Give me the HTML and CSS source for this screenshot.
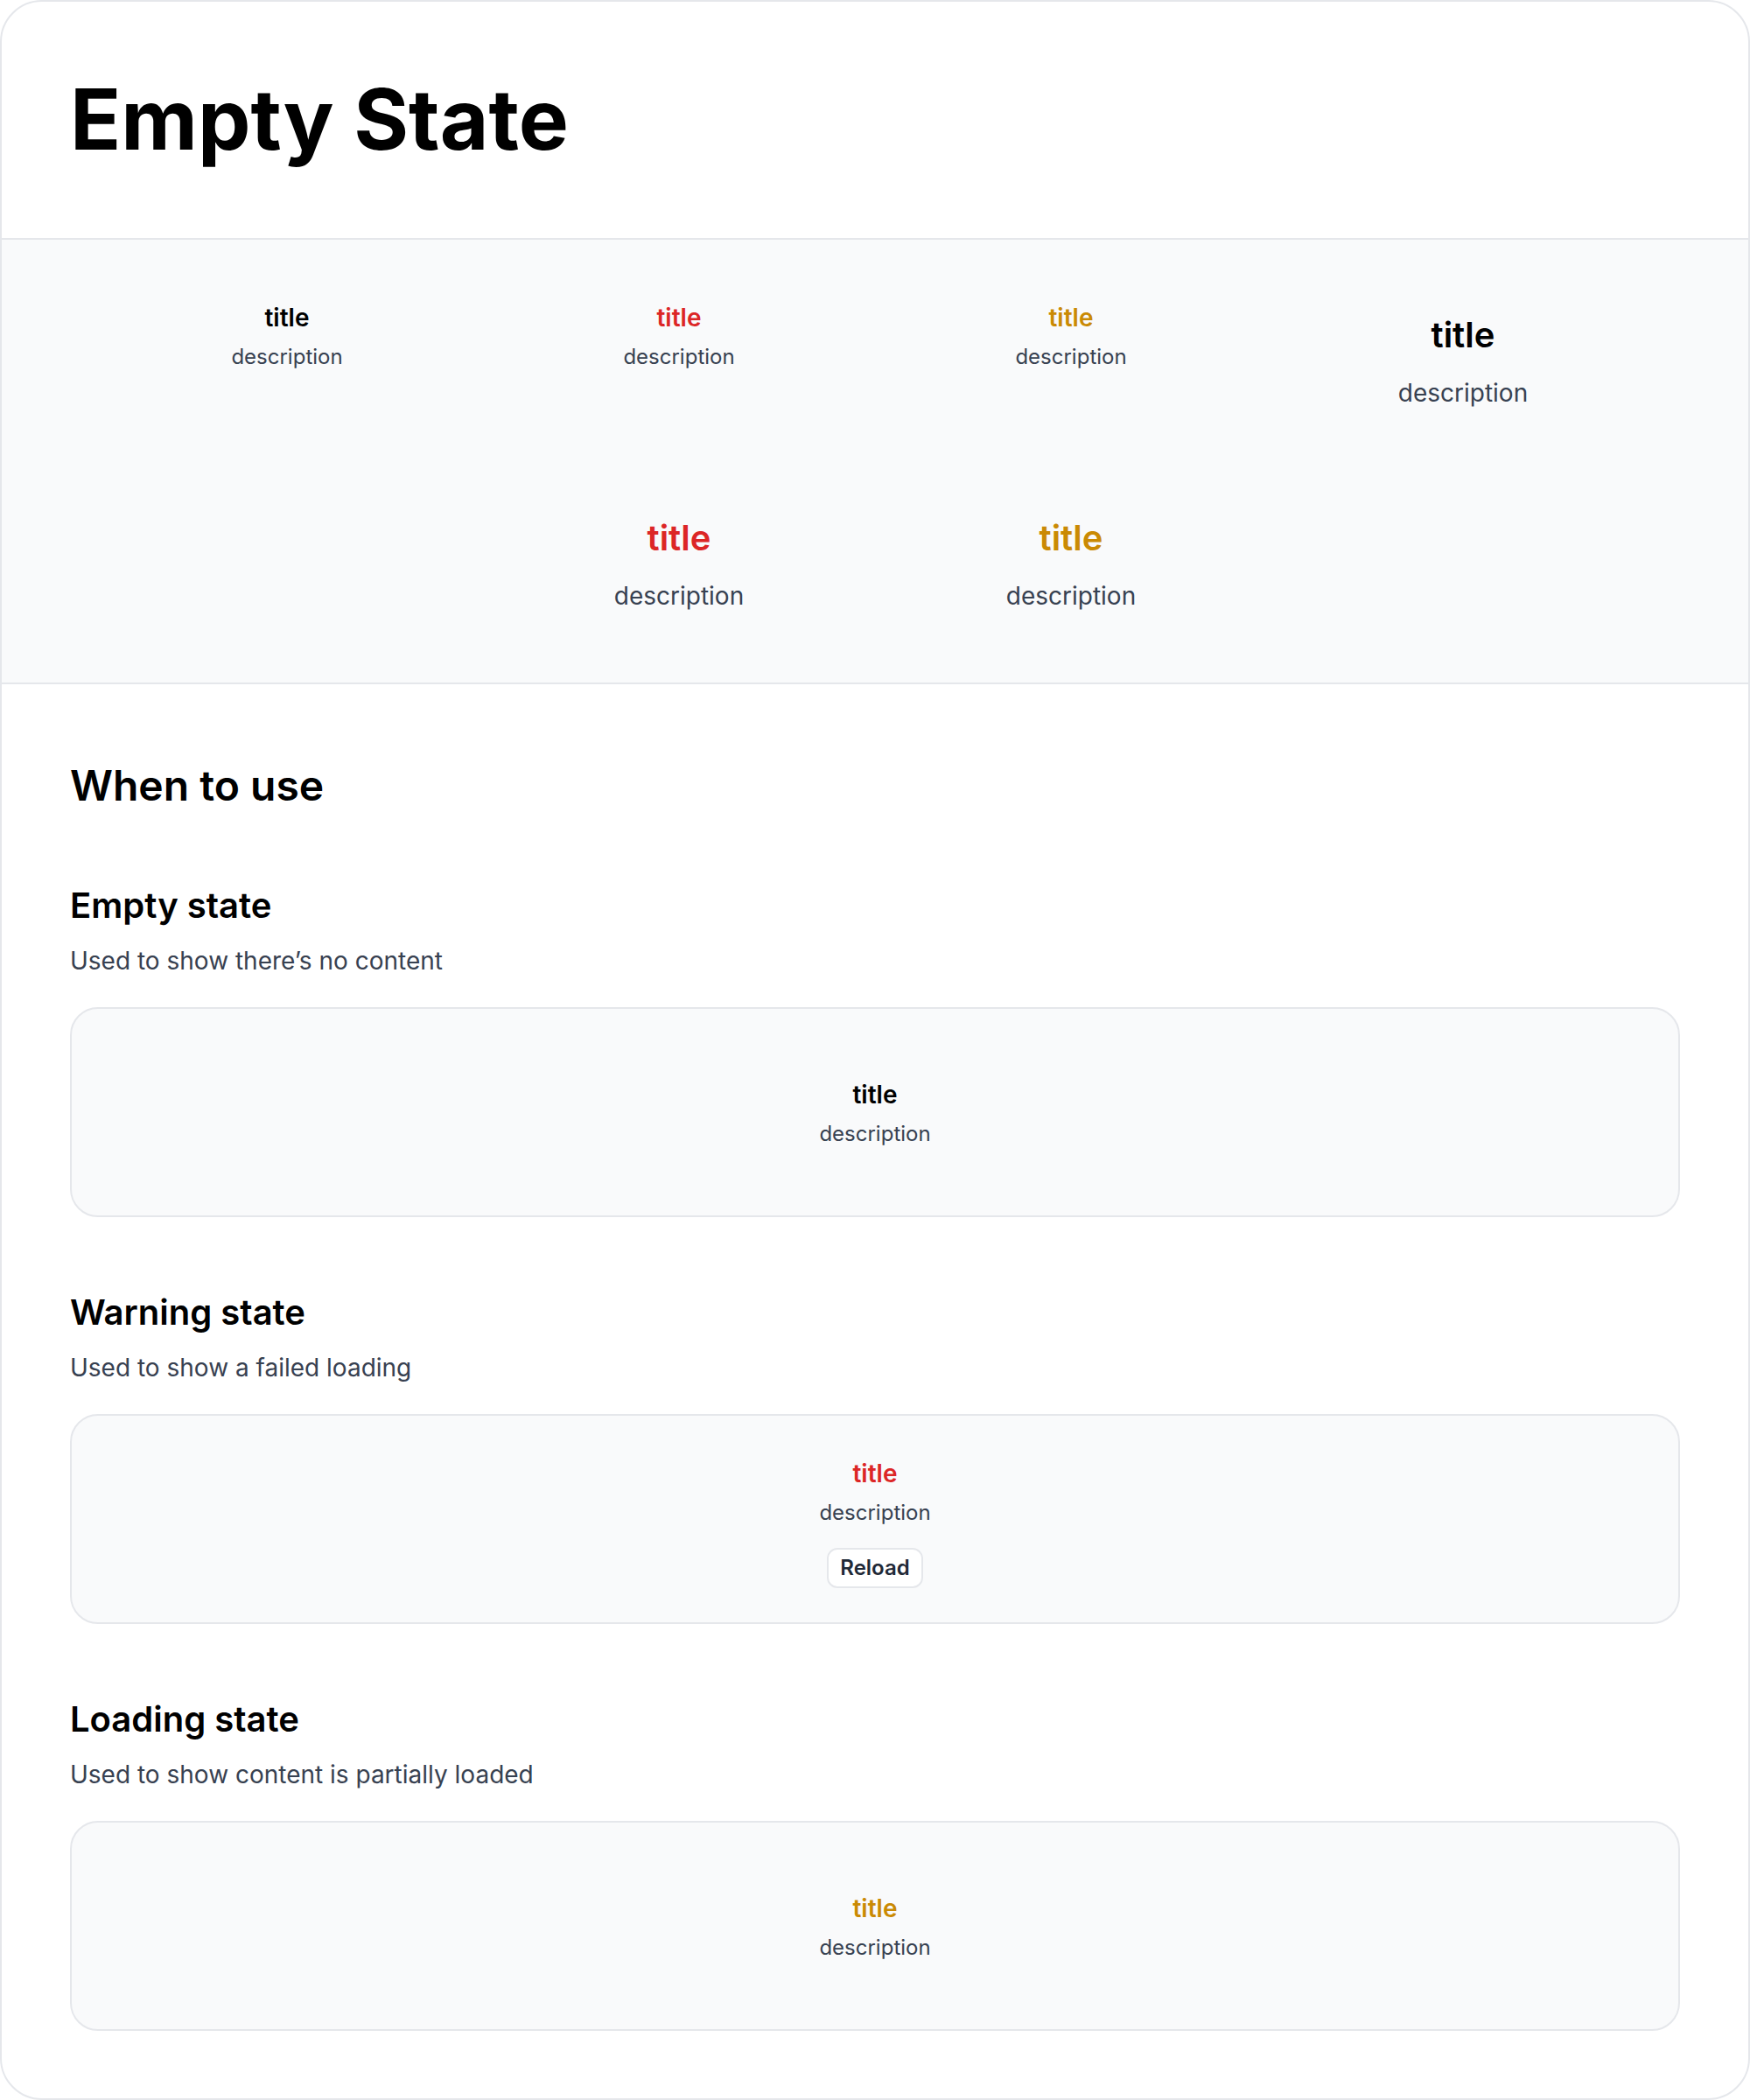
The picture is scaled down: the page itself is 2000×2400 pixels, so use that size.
FILE: index.html
```html
<!DOCTYPE html>
<html lang="en">
<head>
<meta charset="utf-8">
<title>Empty State</title>
<link rel="stylesheet" href="styles.css">
</head>
<body>
<div class="page">
  <header class="page-header">
    <h1 class="page-title">Empty State</h1>
  </header>

  <section class="showcase">
    <div class="es es-sm">
      <div class="es-title">title</div>
      <div class="es-desc">description</div>
    </div>
    <div class="es es-sm">
      <div class="es-title tone-danger">title</div>
      <div class="es-desc">description</div>
    </div>
    <div class="es es-sm">
      <div class="es-title tone-warning">title</div>
      <div class="es-desc">description</div>
    </div>
    <div class="es es-lg">
      <div class="es-title">title</div>
      <div class="es-desc">description</div>
    </div>
    <div class="es es-lg">
      <div class="es-title tone-danger">title</div>
      <div class="es-desc">description</div>
    </div>
    <div class="es es-lg">
      <div class="es-title tone-warning">title</div>
      <div class="es-desc">description</div>
    </div>
  </section>

  <section class="docs">
    <h2 class="docs-title">When to use</h2>

    <div class="usage">
      <h3 class="usage-title">Empty state</h3>
      <p class="usage-text">Used to show there’s no content</p>
      <div class="demo">
        <div class="es es-sm">
          <div class="es-title">title</div>
          <div class="es-desc">description</div>
        </div>
      </div>
    </div>

    <div class="usage">
      <h3 class="usage-title">Warning state</h3>
      <p class="usage-text">Used to show a failed loading</p>
      <div class="demo demo-action">
        <div class="es es-sm">
          <div class="es-title tone-danger">title</div>
          <div class="es-desc">description</div>
          <button class="btn" type="button">Reload</button>
        </div>
      </div>
    </div>

    <div class="usage">
      <h3 class="usage-title">Loading state</h3>
      <p class="usage-text">Used to show content is partially loaded</p>
      <div class="demo">
        <div class="es es-sm">
          <div class="es-title tone-warning">title</div>
          <div class="es-desc">description</div>
        </div>
      </div>
    </div>
  </section>
</div>
</body>
</html>
```

FILE: styles.css
```css
* {
  box-sizing: border-box;
}

html, body {
  margin: 0;
  padding: 0;
  background: #ffffff;
}

body {
  font-family: Inter, "Noto Sans", "Liberation Sans", sans-serif;
  color: #000000;
}

.page {
  width: 2000px;
  height: 2400px;
  border: 2px solid #e5e7eb;
  border-radius: 48px;
  overflow: hidden;
  background: #ffffff;
}

/* Header */
.page-header {
  padding: 86px 78px 88px;
  border-bottom: 2px solid #e5e7eb;
}

.page-title {
  margin: 0;
  font-size: 96px;
  line-height: 96px;
  font-weight: 700;
  letter-spacing: 0;
  color: #000000;
}

/* Showcase */
.showcase {
  display: flex;
  flex-wrap: wrap;
  justify-content: center;
  align-items: flex-start;
  row-gap: 106px;
  padding: 69px 0 79px;
  background: #f9fafb;
  border-bottom: 2px solid #e5e7eb;
}

.showcase .es {
  width: 448px;
}

/* Empty state component */
.es {
  display: flex;
  flex-direction: column;
  align-items: center;
  text-align: center;
}

.es-title {
  font-weight: 600;
  color: #000000;
}

.es-desc {
  font-weight: 400;
  color: #374151;
}

.es-sm .es-title {
  font-size: 28px;
  line-height: 40px;
}

.es-sm .es-desc {
  margin-top: 9px;
  font-size: 24px;
  line-height: 32px;
}

.es-lg {
  padding-top: 12px;
}

.es-lg .es-title {
  font-size: 40px;
  line-height: 56px;
}

.es-lg .es-desc {
  margin-top: 18px;
  font-size: 28px;
  line-height: 40px;
}

.tone-danger {
  color: #dc2626;
}

.tone-warning {
  color: #ca8a04;
}

/* Docs */
.docs {
  padding: 88px 78px 78px;
}

.docs-title {
  margin: 0;
  font-size: 48px;
  line-height: 56px;
  font-weight: 600;
  color: #000000;
}

.usage {
  margin-top: 87px;
}

.usage-title {
  margin: 0;
  font-size: 40px;
  line-height: 44px;
  font-weight: 600;
  color: #000000;
}

.usage-text {
  margin: 21px 0 0;
  font-size: 28px;
  line-height: 40px;
  color: #374151;
}

.demo {
  margin-top: 33px;
  height: 240px;
  display: flex;
  align-items: center;
  justify-content: center;
  background: #f9fafb;
  border: 2px solid #e5e7eb;
  border-radius: 32px;
}

.demo-action {
  padding-top: 6px;
}

.btn {
  margin-top: 24px;
  padding: 5px 13px;
  font-family: inherit;
  font-size: 24px;
  line-height: 32px;
  font-weight: 600;
  color: #1f2937;
  background: #ffffff;
  border: 2px solid #e5e7eb;
  border-radius: 12px;
}
```
